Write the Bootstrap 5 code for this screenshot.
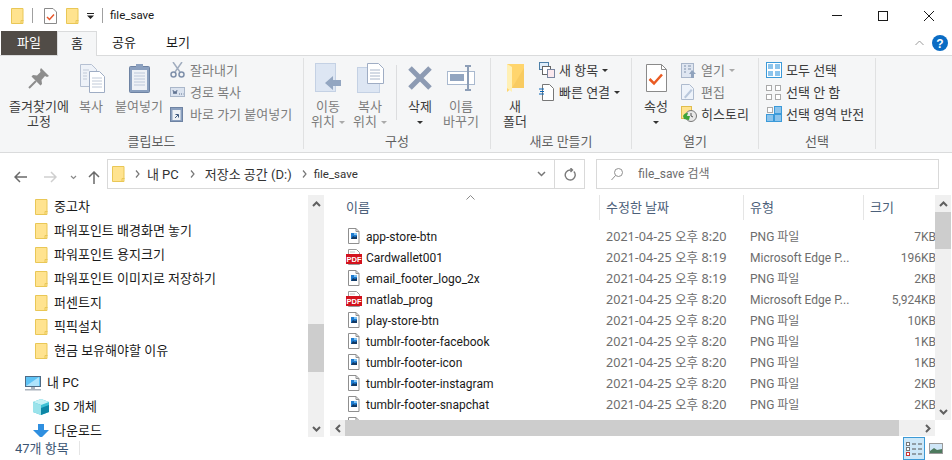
<!DOCTYPE html>
<html lang="ko">
<head>
  <meta charset="utf-8" />
  <title>file_save</title>
  <link href="https://cdn.jsdelivr.net/npm/bootstrap@5.3.0/dist/css/bootstrap.min.css" rel="stylesheet">
  <script src="https://cdn.jsdelivr.net/npm/bootstrap@5.3.0/dist/js/bootstrap.bundle.min.js"></script>

  <style>
    html, body { height: 460px; overflow: hidden; }
    body {
      font-family: Roboto, "Noto Sans CJK KR", sans-serif;
      font-size: 12px;
      line-height: 15px;
      color: #1a1a1a;
      background: #fff;
    }
    svg { display: block; flex: none; }

    /* title bar */
    .title-bar { height: 31px; padding-left: 11px; }
    .title-sep { width: 1px; height: 15px; background: #a0a0a0; }
    .tl8 { margin-left: 8px; } .tl9 { margin-left: 9px; } .tl10 { margin-left: 10px; } .tl11 { margin-left: 11px; }
    .title-text { margin-left: 7px; font-size: 11.5px; }
    .win-btn { width: 46px; height: 31px; }

    /* ribbon */
    .tab-row { height: 24px; padding-left: 1px; }
    .rtab { height: 24px; line-height: 23px; text-align: center; font-size: 13px; }
    .rtab-file { width: 56px; background: #514c47; color: #fff; }
    .rtab-home { width: 40px; height: 25px; background: #f5f6f7; border: 1px solid #dadbdc; border-bottom: 0; position: relative; z-index: 1; }
    .rtab-plain { width: 54px; }
    .ribbon { height: 98px; background: #f5f6f7; border-top: 1px solid #dadbdc; border-bottom: 1px solid #dadbdc; padding-top: 2px; }
    .rgroup { height: 91px; border-right: 1px solid #e0e1e2; }
    .g-clip { width: 304px; }
    .g-org { width: 187px; }
    .g-new { width: 141px; }
    .g-open { width: 127px; }
    .g-sel { width: 117px; }
    .rbody { height: 77px; padding-top: 1px; }
    .rlabel { height: 14px; line-height: 14px; text-align: center; color: #5f5f5f; font-size: 13px; }
    .big-btn { text-align: center; font-size: 13px; color: #3c3c3c; }
    .big-btn .big-ico { height: 38px; display: flex; justify-content: center; align-items: center; margin-bottom: 2px; }
    .big-btn.off { color: #7d7d7d; }
    .w26 { width: 26px; } .w36 { width: 36px; } .w46 { width: 46px; } .w48 { width: 48px; } .w58 { width: 58px; } .w78 { width: 78px; }
    .ml1 { margin-left: 1px; } .ml2 { margin-left: 2px; } .ml3 { margin-left: 3px; } .ml6 { margin-left: 6px; } .ml7 { margin-left: 7px; }
    .rule { width: 1px; height: 55px; background: #dcdddf; margin: 6px 0 0 8px; }
    .small-btn { height: 22px; font-size: 13px; color: #3c3c3c; white-space: nowrap; }
    .small-btn.off { color: #7d7d7d; }
    .small-btn .s-ico { width: 20px; display: flex; justify-content: flex-start; }
    .caret-d { width: 0; height: 0; border-left: 3px solid transparent; border-right: 3px solid transparent; border-top: 3px solid #333; display: inline-block; vertical-align: middle; margin-left: 4px; }
    .caret-off { border-top-color: #aaa; }

    /* address row */
    .addr-row { height: 42px; padding: 6px 13px 0 14px; }
    .nav-arrows { width: 93px; }
    .nl17 { margin-left: 17px; } .nl13 { margin-left: 13px; } .nl11 { margin-left: 11px; }
    .addr-box { width: 479px; height: 30px; border: 1px solid #d9d9d9; padding-left: 4px; color: #333; font-size: 13px; }
    .addr-chev { margin: 0 7px 0 10px; }
    .addr-chev2 { margin: 0 10px 0 11px; }
    .addr-latin { font-size: 11.5px; }
    .addr-refresh { width: 30px; height: 28px; border-left: 1px solid #d9d9d9; }
    .search-box { width: 343px; height: 30px; margin-left: 11px; border: 1px solid #d9d9d9; padding-left: 14px; color: #6d6d6d; }
    .search-text { margin-left: 15px; }

    /* main panes */
    .main-pane { height: 242px; }
    .nav-pane { width: 308px; }
    .nav-row { height: 24px; white-space: nowrap; font-size: 13px; }
    .nav-row span.n-label { position: relative; top: -1px; }
    .lvl2 { padding-left: 35px; }
    .lvl2 .n-ico { width: 19px; }
    .lvl1 { padding-left: 25px; }
    .lvl1 .n-ico { width: 22px; }
    .lvl2b { padding-left: 33px; }
    .lvl2b .n-ico { width: 21px; }
    .nav-gap { height: 8px; }
    .nav-scroll { width: 16px; background: #f0f0f0; margin-right: 4px; }
    .sb-cap { height: 17px; }
    .nav-thumb { height: 48px; background: #cdcdcd; }
    .nav-top { height: 112px; }
    .file-pane { width: 624px; }
    .file-view { height: 225px; width: 607px; }
    .head-row { height: 26px; color: #4c607a; position: relative; font-size: 13px; }
    .hcol { height: 25px; line-height: 26px; padding-left: 6px; border-right: 1px solid #e5e5e5; }
    .c-name { width: 272px; padding-left: 18px; }
    .c-date { width: 144px; }
    .c-type { width: 120px; }
    .c-size { width: 71px; border-right: 0; }
    .sort-up { position: absolute; left: 138px; top: 0; }
    .file-list { height: 199px; padding-top: 5px; overflow: hidden; }
    .frow { height: 21px; line-height: 21px; color: #6d6d6d; white-space: nowrap; }
    .frow .c-name { padding-left: 18px; color: #1a1a1a; display: flex; align-items: center; }
    .frow .f-ico { width: 20px; }
    .frow .f-name { padding-top: 1px; }
    .frow .c-date { padding-left: 6px; font-family: "Noto Sans", "Noto Sans CJK KR", sans-serif; font-size: 12.6px; }
    .frow .c-type { padding: 1px 0 0 6px; line-height: 20px; }
    .frow .c-size { display: flex; justify-content: flex-end; overflow: hidden; padding-top: 1px; line-height: 20px; }
    .frow .c-size span { margin-right: -1px; }
    .v-scroll { width: 16px; background: #f0f0f0; }
    .v-thumb { height: 37px; background: #cdcdcd; }
    .h-scroll { height: 16px; width: 605px; margin-left: 2px; background: #f0f0f0; }
    .h-cap { width: 15px; height: 16px; }
    .h-thumb { width: 554px; height: 16px; background: #cdcdcd; }

    /* status bar */
    .status-bar { height: 24px; padding: 0 8px 2px 15px; color: #3b5573; font-size: 13px; }
    .status-sep { width: 1px; height: 14px; background: #e5e5e5; margin-left: 10px; }
    .view-on { width: 22px; height: 23px; background: #cde8f8; border: 1px solid #3d9ad6; }
    .view-wrap { margin-top: 1px; margin-right: 1px; }
  </style>
</head>
<body>
  <svg width="0" height="0" style="position:absolute">
    <defs>
      <symbol id="folder" viewBox="0 0 13 16">
        <path d="M.5.500h11.500v15H.5z" fill="#ffe38f" stroke="#e9c756"/>
        <path d="M10 15.500v-3h2.500" fill="none" stroke="#e9c756"/>
      </symbol>
      <symbol id="png" viewBox="0 0 16 17">
        <path d="M2.500.5h7.500l3 3v12H2.500z" fill="#fff" stroke="#8f8f8f"/>
        <path d="M10 .5v3h3" fill="none" stroke="#8f8f8f"/>
        <rect x="5" y="5" width="6" height="6" fill="#1f7cd0"/>
        <path d="M5 11l2-3 2 1 2-1v3z" fill="#123a66"/>
        <rect x="8" y="5" width="3" height="2" fill="#7fc1f0"/>
      </symbol>
      <symbol id="pdf" viewBox="0 0 16 17">
        <path d="M2.500.5h8l3 3v12h-11z" fill="#fff" stroke="#9a9a9a"/>
        <path d="M4 3h5" stroke="#c4c4c4"/>
        <rect x="0" y="5" width="16" height="10" fill="#d3121d"/>
        <text x="8" y="12.800" text-anchor="middle" font-family="Liberation Sans" font-size="7.500" font-weight="700" fill="#fff">PDF</text>
      </symbol>
      <symbol id="sb-up" viewBox="0 0 9 6"><path d="M1 5l3.500-3.500L8 5" fill="none" stroke="#606060" stroke-width="2"/></symbol>
      <symbol id="sb-down" viewBox="0 0 9 6"><path d="M1 1l3.500 3.500L8 1" fill="none" stroke="#606060" stroke-width="2"/></symbol>
    </defs>
  </svg>

  <!-- title bar -->
  <div class="title-bar d-flex align-items-center">
    <svg width="13" height="16"><use href="#folder"/></svg>
    <span class="title-sep tl8"></span>
    <svg class="tl11" width="13" height="16" viewBox="0 0 13 16"><path d="M.5.500h8.500l3.500 3.500v11.500H.5z" fill="#fff" stroke="#8a8a8a"/><path d="M3 9l2.500 2.500L10 6.500" fill="none" stroke="#e8562a" stroke-width="1.500"/></svg>
    <svg class="tl9" width="13" height="16"><use href="#folder"/></svg>
    <svg class="tl8" width="7" height="6" viewBox="0 0 7 6"><path d="M0 0h7v1H0zM0 2.500h7L3.500 6z" fill="#222"/></svg>
    <span class="title-sep tl8"></span>
    <span class="title-text">file_save</span>
    <div class="ms-auto d-flex">
      <div class="win-btn d-flex align-items-center justify-content-center"><svg width="10" height="1"><rect width="10" height="1" fill="#1a1a1a"/></svg></div>
      <div class="win-btn d-flex align-items-center justify-content-center"><svg width="10" height="10"><rect x=".5" y=".5" width="9" height="9" fill="none" stroke="#1a1a1a"/></svg></div>
      <div class="win-btn d-flex align-items-center justify-content-center"><svg width="10" height="10"><path d="M0 0l10 10M10 0L0 10" stroke="#1a1a1a"/></svg></div>
    </div>
  </div>

  <!-- ribbon tabs -->
  <div class="tab-row d-flex">
    <div class="rtab rtab-file">파일</div>
    <div class="rtab rtab-home">홈</div>
    <div class="rtab rtab-plain">공유</div>
    <div class="rtab rtab-plain">보기</div>
    <div class="ms-auto d-flex align-items-center pe-1 gap-2">
      <svg width="9" height="6" viewBox="0 0 9 6"><path d="M.5 5l4-4 4 4" fill="none" stroke="#9a9a9a"/></svg>
      <svg width="16" height="16" viewBox="0 0 16 16"><circle cx="8" cy="8" r="8" fill="#0b6cc4"/><text x="8" y="12.500" text-anchor="middle" font-family="Liberation Sans" font-size="12" font-weight="700" fill="#fff">?</text></svg>
    </div>
  </div>

  <!-- ribbon -->
  <div class="ribbon d-flex">
    <div class="rgroup g-clip">
      <div class="rbody d-flex">
        <div class="big-btn w78">
          <div class="big-ico"><svg width="22" height="22" viewBox="0 0 22 22"><path d="M13 1l8 8-2 1-2-1-3.500 4 .5 4-1.500 1.500-9-9L5 8l4 .5L12.500 5 12 3z" fill="#8d8d8d"/><path d="M8 14l-7 7" stroke="#8d8d8d" stroke-width="2"/></svg></div>
          즐겨찾기에<br>고정
        </div>
        <div class="big-btn w26 off">
          <div class="big-ico"><svg class="ml3" width="25" height="29" viewBox="0 0 25 29"><path d="M.5.500h11l5 5v17H.5z" fill="#eef2f8" stroke="#b5c0d2"/><path d="M9.500 7.500h10l5 5v16h-15z" fill="#fff" stroke="#9fadc4"/><path d="M3 6h6M3 9h4M3 12h4M3 15h4M12 14h10M12 17h10M12 20h10M12 23h10" stroke="#c1cad8"/></svg></div>
          복사
        </div>
        <div class="big-btn w58 ml6 off">
          <div class="big-ico"><svg width="21" height="30" viewBox="0 0 21 30"><rect x=".5" y="3.500" width="20" height="26" rx="1" fill="#8ba0bf" stroke="#6e83a3"/><rect x="3" y="7" width="15" height="20" fill="#eef1f6"/><path d="M5 10h11M5 13h11M5 16h11M5 19h11M5 22h11" stroke="#bdc8da"/><rect x="7" y="1" width="7" height="5" fill="#8ba0bf"/></svg></div>
          붙여넣기
        </div>
        <div class="ml2">
          <div class="small-btn d-flex align-items-center off"><span class="s-ico"><svg width="15" height="16" viewBox="0 0 15 16"><path d="M3 0l7 10M12 0L5 10" stroke="#a1adbf" stroke-width="1.500"/><circle cx="3.500" cy="12.500" r="2.500" fill="none" stroke="#7f90aa" stroke-width="1.500"/><circle cx="11.500" cy="12.500" r="2.500" fill="none" stroke="#7f90aa" stroke-width="1.500"/></svg></span>잘라내기</div>
          <div class="small-btn d-flex align-items-center off"><span class="s-ico"><svg width="15" height="10" viewBox="0 0 15 10"><rect x=".5" y=".5" width="14" height="9" fill="#dbe3ef" stroke="#aab7ca"/><path d="M3 3l1 4 1-3 1 3 1-4M9 7h1M11 7h1M13 7h.5" fill="none" stroke="#5f7290"/></svg></span>경로 복사</div>
          <div class="small-btn d-flex align-items-center off"><span class="s-ico"><svg width="13" height="16" viewBox="0 0 13 16"><rect x=".5" y="1.500" width="12" height="14" fill="#8ba0bf" stroke="#6e83a3"/><rect x="2.500" y="4" width="8" height="10" fill="#eef1f6"/><path d="M5 12l3-3M5.500 8.500H8.500V11.500" fill="none" stroke="#3f5a80"/></svg></span>바로 가기 붙여넣기</div>
        </div>
      </div>
      <div class="rlabel">클립보드</div>
    </div>

    <div class="rgroup g-org">
      <div class="rbody d-flex">
        <div class="big-btn w48 off">
          <div class="big-ico"><svg width="27" height="30" viewBox="0 0 27 30"><rect x=".5" y=".5" width="20" height="28" fill="#dde6f3" stroke="#c4d1e4"/><path d="M10 20l8-7v4h8v6h-8v4z" fill="#93a6c1"/></svg></div>
          이동<br>위치<span class="caret-d caret-off"></span>
        </div>
        <div class="big-btn w36 off">
          <div class="big-ico"><svg width="27" height="30" viewBox="0 0 27 30"><rect x=".5" y="4.500" width="22" height="25" fill="#dde6f3" stroke="#c4d1e4"/><path d="M10.500.5h11l5 5v15h-16z" fill="#fff" stroke="#9fadc4"/><path d="M13 7h10M13 10h10M13 13h10M13 16h10" stroke="#a9b6ca"/></svg></div>
          복사<br>위치<span class="caret-d caret-off"></span>
        </div>
        <div class="rule"></div>
        <div class="big-btn w46">
          <div class="big-ico"><svg width="26" height="26" viewBox="0 0 26 26"><path d="M3 3l20 20M23 3L3 23" stroke="#8d9bb3" stroke-width="5"/></svg></div>
          삭제<br><span class="caret-d ms-0"></span>
        </div>
        <div class="big-btn w36 off">
          <div class="big-ico"><svg width="28" height="28" viewBox="0 0 28 28"><rect x=".5" y="7.500" width="27" height="13" fill="#fff" stroke="#a9b9cf"/><rect x="3" y="10" width="14" height="7" fill="#92a5c0"/><path d="M18 2h6M21 2v24M18 26h6" stroke="#8d9eb7" stroke-width="2"/></svg></div>
          이름<br>바꾸기
        </div>
      </div>
      <div class="rlabel">구성</div>
    </div>

    <div class="rgroup g-new">
      <div class="rbody d-flex">
        <div class="big-btn w48">
          <div class="big-ico"><svg width="19" height="28" viewBox="0 0 19 28"><path d="M1 0h17v24H6l-5 4z" fill="#ffd56d"/><path d="M1 0l5 3v25l-5-4z" fill="#fff0b5"/><path d="M6 24h12V4z" fill="#f2c256" opacity=".5"/></svg></div>
          새<br>폴더
        </div>
        <div>
          <div class="small-btn d-flex align-items-center"><span class="s-ico"><svg width="16" height="16" viewBox="0 0 16 16"><rect x=".5" y=".5" width="9" height="7" fill="#dfeefb" stroke="#4c7fa8"/><rect x="3.500" y="4.500" width="8" height="8" fill="#fff" stroke="#666"/><rect x="8.500" y="7.500" width="7" height="8" fill="#fbe9ee" stroke="#7a86a0"/></svg></span>새 항목<span class="caret-d"></span></div>
          <div class="small-btn d-flex align-items-center"><span class="s-ico"><svg width="15" height="17" viewBox="0 0 15 17"><path d="M3.500.5h7l4 4v12h-11z" fill="#fff" stroke="#777"/><path d="M0 5h5M1 7.500h4M0 10h5" stroke="#0b66b8"/></svg></span>빠른 연결<span class="caret-d"></span></div>
        </div>
      </div>
      <div class="rlabel">새로 만들기</div>
    </div>

    <div class="rgroup g-open">
      <div class="rbody d-flex">
        <div class="big-btn w48">
          <div class="big-ico"><svg width="21" height="28" viewBox="0 0 21 28"><path d="M.5.500h15l5 5v22H.5z" fill="#fff" stroke="#8a8a8a"/><path d="M15.500.5v5h5" fill="none" stroke="#8a8a8a"/><path d="M3.500 15l4.500 4.500 8-9" fill="none" stroke="#ea5b23" stroke-width="2.500"/></svg></div>
          속성<br><span class="caret-d ms-0"></span>
        </div>
        <div class="ml1">
          <div class="small-btn d-flex align-items-center off"><span class="s-ico"><svg width="15" height="15" viewBox="0 0 15 15"><rect x=".5" y=".5" width="12" height="14" fill="#dfe6f1" stroke="#a9b6ca"/><path d="M3 3h2M3 6h2M3 9h2M7 3h3M7 6h3" stroke="#7f90aa"/><path d="M11 7l4 4h-2v4h-3v-4H8z" fill="#90a3bd"/></svg></span>열기<span class="caret-d caret-off"></span></div>
          <div class="small-btn d-flex align-items-center off"><span class="s-ico"><svg width="13" height="16" viewBox="0 0 13 16"><path d="M.5.500h8l4 4v11H.5z" fill="#eef3fa" stroke="#aebbce"/><path d="M3 13l7-8 1.500 1.500-7 8z" fill="#b9c8dc"/></svg></span>편집</div>
          <div class="small-btn d-flex align-items-center"><span class="s-ico"><svg width="16" height="16" viewBox="0 0 16 16"><rect x=".5" y=".5" width="10" height="12" fill="#ffe38f" stroke="#e0bd4e"/><circle cx="10" cy="10" r="5.500" fill="#e8e8e8" stroke="#777"/><path d="M10 7v3l2 1" fill="none" stroke="#555"/><path d="M2 10a5 5 0 0 1 5-3l-1 3 3 0-1 4-5-1z" fill="#3da33a"/></svg></span>히스토리</div>
        </div>
      </div>
      <div class="rlabel">열기</div>
    </div>

    <div class="rgroup g-sel">
      <div class="rbody d-flex">
        <div class="ml7">
          <div class="small-btn d-flex align-items-center"><span class="s-ico"><svg width="16" height="16" viewBox="0 0 16 16"><rect x=".5" y=".5" width="15" height="15" fill="#fff" stroke="#3b9ad9"/><rect x="2" y="2" width="5" height="5" fill="#8cc4ec"/><rect x="9" y="2" width="5" height="5" fill="#8cc4ec"/><rect x="2" y="9" width="5" height="5" fill="#8cc4ec"/><rect x="9" y="9" width="5" height="5" fill="#8cc4ec"/></svg></span>모두 선택</div>
          <div class="small-btn d-flex align-items-center"><span class="s-ico"><svg width="15" height="15" viewBox="0 0 15 15"><g fill="#fff" stroke="#aaa"><rect x=".5" y=".5" width="5" height="5"/><rect x="9.500" y=".5" width="5" height="5"/><rect x=".5" y="9.500" width="5" height="5"/><rect x="9.500" y="9.500" width="5" height="5"/></g></svg></span>선택 안 함</div>
          <div class="small-btn d-flex align-items-center"><span class="s-ico"><svg width="16" height="16" viewBox="0 0 16 16"><g fill="#fff" stroke="#aaa"><rect x="1.500" y="1.500" width="5" height="5"/></g><g fill="#8cc4ec" stroke="#3b9ad9"><rect x="8.500" y=".5" width="7" height="7"/><rect x=".5" y="8.500" width="7" height="7"/><rect x="8.500" y="8.500" width="7" height="7"/></g></svg></span>선택 영역 반전</div>
        </div>
      </div>
      <div class="rlabel">선택</div>
    </div>
  </div>

  <!-- address bar -->
  <div class="addr-row d-flex">
    <div class="nav-arrows d-flex align-items-center">
      <svg width="13" height="12" viewBox="0 0 13 12"><path d="M6 1L1 6l5 5M1 6h12" fill="none" stroke="#6a6a6a" stroke-width="1.500"/></svg>
      <svg class="nl17" width="13" height="12" viewBox="0 0 13 12"><path d="M7 1l5 5-5 5M12 6H0" fill="none" stroke="#cfcfcf" stroke-width="1.500"/></svg>
      <svg class="nl13" width="7" height="5" viewBox="0 0 7 5"><path d="M1 1l2.500 2.500L6 1" fill="none" stroke="#8a8a8a" stroke-width="1.200"/></svg>
      <svg class="nl11" width="12" height="13" viewBox="0 0 12 13"><path d="M1 6l5-5 5 5M6 1v12" fill="none" stroke="#6a6a6a" stroke-width="1.500"/></svg>
    </div>
    <div class="addr-box d-flex align-items-center">
      <svg width="13" height="16"><use href="#folder"/></svg>
      <svg class="addr-chev" width="5" height="8" viewBox="0 0 5 8"><path d="M1 .5L4 4 1 7.500" fill="none" stroke="#777" stroke-width="1.200"/></svg><span>내 PC</span>
      <svg class="addr-chev2" width="5" height="8" viewBox="0 0 5 8"><path d="M1 .5L4 4 1 7.500" fill="none" stroke="#777" stroke-width="1.200"/></svg><span>저장소 공간 (D:)</span>
      <svg class="addr-chev" width="5" height="8" viewBox="0 0 5 8"><path d="M1 .5L4 4 1 7.500" fill="none" stroke="#777" stroke-width="1.200"/></svg><span class="addr-latin">file_save</span>
      <svg class="ms-auto me-2" width="9" height="6" viewBox="0 0 9 6"><path d="M1 1l3.500 3.500L8 1" fill="none" stroke="#777" stroke-width="1.500"/></svg>
      <div class="addr-refresh d-flex align-items-center justify-content-center">
        <svg width="12" height="13" viewBox="0 0 12 13"><path d="M9.800 3.500a5 5 0 1 1-3.800-1.500H8M6.500 0l2 2-2 2" fill="none" stroke="#7a7a7a" stroke-width="1.400"/></svg>
      </div>
    </div>
    <div class="search-box d-flex align-items-center">
      <svg width="12" height="13" viewBox="0 0 12 13"><circle cx="7.500" cy="4.500" r="4" fill="none" stroke="#8f8f8f"/><path d="M4.500 7.500L.5 12" stroke="#8f8f8f"/></svg>
      <span class="search-text">file_save 검색</span>
    </div>
  </div>

  <!-- panes -->
  <div class="main-pane d-flex">
    <div class="nav-pane overflow-hidden">
      <div class="nav-row lvl2 d-flex align-items-center"><span class="n-ico"><svg width="13" height="16"><use href="#folder"/></svg></span><span class="n-label">중고차</span></div>
      <div class="nav-row lvl2 d-flex align-items-center"><span class="n-ico"><svg width="13" height="16"><use href="#folder"/></svg></span><span class="n-label">파워포인트 배경화면 놓기</span></div>
      <div class="nav-row lvl2 d-flex align-items-center"><span class="n-ico"><svg width="13" height="16"><use href="#folder"/></svg></span><span class="n-label">파워포인트 용지크기</span></div>
      <div class="nav-row lvl2 d-flex align-items-center"><span class="n-ico"><svg width="13" height="16"><use href="#folder"/></svg></span><span class="n-label">파워포인트 이미지로 저장하기</span></div>
      <div class="nav-row lvl2 d-flex align-items-center"><span class="n-ico"><svg width="13" height="16"><use href="#folder"/></svg></span><span class="n-label">퍼센트지</span></div>
      <div class="nav-row lvl2 d-flex align-items-center"><span class="n-ico"><svg width="13" height="16"><use href="#folder"/></svg></span><span class="n-label">픽픽설치</span></div>
      <div class="nav-row lvl2 d-flex align-items-center"><span class="n-ico"><svg width="13" height="16"><use href="#folder"/></svg></span><span class="n-label">현금 보유해야할 이유</span></div>
      <div class="nav-gap"></div>
      <div class="nav-row lvl1 d-flex align-items-center"><span class="n-ico"><svg width="16" height="15" viewBox="0 0 16 15"><rect x=".5" y=".5" width="15" height="10" fill="#5ec3f5" stroke="#4f6b85"/><path d="M1 10L14 1v9z" fill="#aee3fb"/><rect x="0" y="13" width="16" height="1.500" fill="#a9b2bc"/><rect x="6" y="11" width="4" height="2" fill="#a9b2bc"/></svg></span><span class="n-label">내 PC</span></div>
      <div class="nav-row lvl2b d-flex align-items-center"><span class="n-ico"><svg width="16" height="16" viewBox="0 0 16 16"><path d="M8 0l8 3v10l-8 3-8-3V3z" fill="#3fc1d4"/><path d="M8 0l8 3-8 3-8-3z" fill="#c6f1f5"/><path d="M0 3l8 3v10l-8-3z" fill="#9be3eb"/><path d="M8 9l8-3v7l-8 3z" fill="#0e87a6"/></svg></span><span class="n-label">3D 개체</span></div>
      <div class="nav-row lvl2b d-flex align-items-center"><span class="n-ico"><svg width="16" height="15" viewBox="0 0 16 15"><path d="M5 0h6v6h5l-8 8-8-8h5z" fill="#2f8fe0"/></svg></span><span class="n-label">다운로드</span></div>
    </div>
    <div class="nav-scroll d-flex flex-column align-items-center">
      <div class="sb-cap d-flex align-items-center"><svg width="9" height="6"><use href="#sb-up"/></svg></div>
      <div class="nav-top"></div>
      <div class="nav-thumb w-100"></div>
      <div class="flex-grow-1"></div>
      <div class="sb-cap d-flex align-items-center"><svg width="9" height="6"><use href="#sb-down"/></svg></div>
    </div>

    <div class="file-pane">
      <div class="d-flex">
        <div class="file-view">
          <div class="head-row d-flex">
            <svg class="sort-up" width="9" height="5" viewBox="0 0 9 5"><path d="M.5 4.500l4-4 4 4" fill="none" stroke="#8a8a8a"/></svg>
            <div class="hcol c-name">이름</div>
            <div class="hcol c-date">수정한 날짜</div>
            <div class="hcol c-type">유형</div>
            <div class="hcol c-size">크기</div>
          </div>
          <div class="file-list" id="fileList"></div>
        </div>
        <div class="v-scroll d-flex flex-column align-items-center">
          <div class="sb-cap d-flex align-items-center"><svg width="9" height="6"><use href="#sb-up"/></svg></div>
          <div class="v-thumb w-100"></div>
          <div class="flex-grow-1"></div>
          <div class="sb-cap d-flex align-items-center"><svg width="9" height="6"><use href="#sb-down"/></svg></div>
        </div>
      </div>
      <div class="h-scroll d-flex">
        <div class="h-cap d-flex align-items-center justify-content-center"><svg width="6" height="9" viewBox="0 0 6 9"><path d="M5 1L1.500 4.500 5 8" fill="none" stroke="#606060" stroke-width="2"/></svg></div>
        <div class="h-thumb"></div>
        <div class="flex-grow-1 d-flex align-items-center justify-content-end pe-1"><svg width="6" height="9" viewBox="0 0 6 9"><path d="M1 1l3.500 3.500L1 8" fill="none" stroke="#606060" stroke-width="2"/></svg></div>
      </div>
    </div>
  </div>

  <!-- status bar -->
  <div class="status-bar d-flex align-items-center">
    <span>47개 항목</span>
    <span class="status-sep"></span>
    <div class="ms-auto d-flex align-items-center gap-1 view-wrap">
      <div class="view-on d-flex align-items-center justify-content-center">
        <svg width="16" height="14" viewBox="0 0 16 14"><g fill="#fff" stroke="#777"><rect x=".5" y=".5" width="3" height="3"/><rect x=".5" y="5.500" width="3" height="3"/></g><rect x=".5" y="10.500" width="3" height="3" fill="#fff" stroke="#c33"/><path d="M6 2h4M12 2h4M6 7h4M12 7h4M6 12h4M12 12h4" stroke="#555"/></svg>
      </div>
      <svg width="14" height="11" viewBox="0 0 14 11"><rect x=".5" y=".5" width="13" height="10" fill="#cfe6f7" stroke="#9a9a9a"/><path d="M1 8l4-3 3 2 5-1v4H1z" fill="#4d7a5e"/></svg>
    </div>
  </div>

  <script>
    const files = [
      ['app-store-btn', 'png', '2021-04-25 오후 8:20', 'PNG 파일', '7KB'],
      ['Cardwallet001', 'pdf', '2021-04-25 오후 8:19', 'Microsoft Edge P...', '196KB'],
      ['email_footer_logo_2x', 'png', '2021-04-25 오후 8:19', 'PNG 파일', '2KB'],
      ['matlab_prog', 'pdf', '2021-04-25 오후 8:20', 'Microsoft Edge P...', '5,924KB'],
      ['play-store-btn', 'png', '2021-04-25 오후 8:20', 'PNG 파일', '10KB'],
      ['tumblr-footer-facebook', 'png', '2021-04-25 오후 8:20', 'PNG 파일', '1KB'],
      ['tumblr-footer-icon', 'png', '2021-04-25 오후 8:20', 'PNG 파일', '1KB'],
      ['tumblr-footer-instagram', 'png', '2021-04-25 오후 8:20', 'PNG 파일', '2KB'],
      ['tumblr-footer-snapchat', 'png', '2021-04-25 오후 8:20', 'PNG 파일', '2KB'],
      ['', 'png', '', '', '']
    ];

    document.getElementById('fileList').innerHTML = files.map(f => `
      <div class="frow d-flex">
        <div class="c-name"><span class="f-ico"><svg width="16" height="17"><use href="#${f[1]}"/></svg></span><span class="f-name">${f[0]}</span></div>
        <div class="c-date">${f[2]}</div>
        <div class="c-type">${f[3]}</div>
        <div class="c-size"><span>${f[4]}</span></div>
      </div>`).join('');
  </script>
</body>
</html>
